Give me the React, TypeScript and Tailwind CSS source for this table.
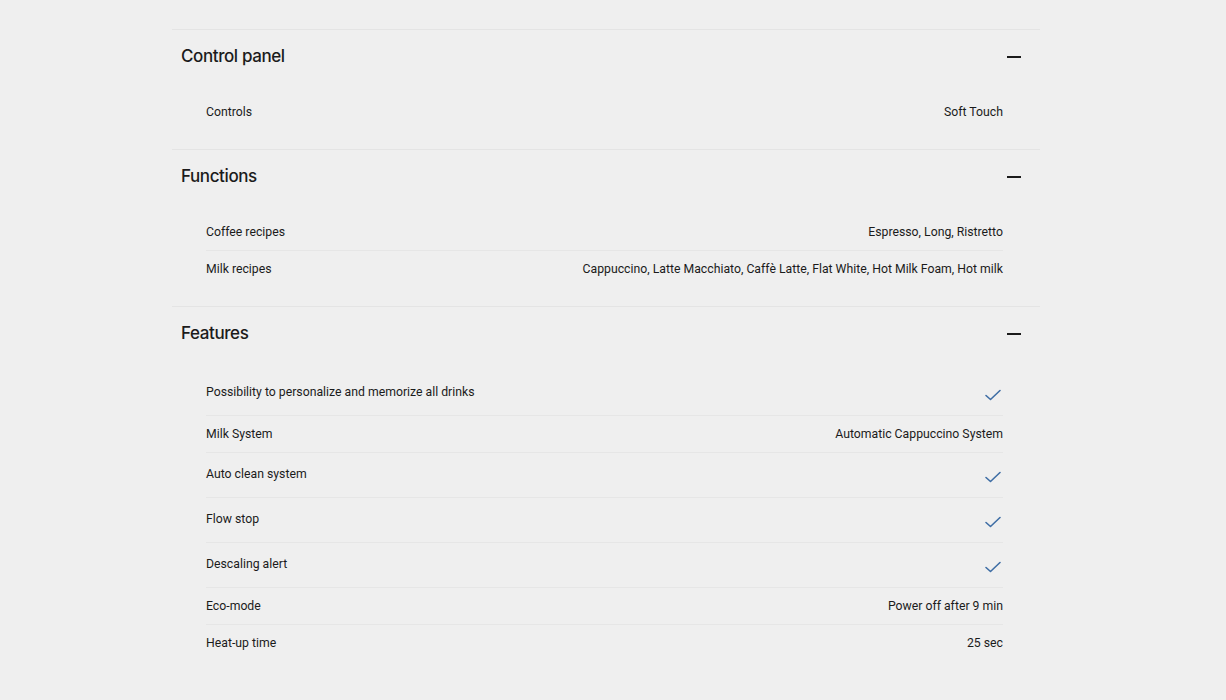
import React from 'react';

type Row = { label: string; value?: string; check?: boolean };

const sections: { title: string; rows: Row[] }[] = [
  { title: 'Control panel', rows: [{ label: 'Controls', value: 'Soft Touch' }] },
  {
    title: 'Functions',
    rows: [
      { label: 'Coffee recipes', value: 'Espresso, Long, Ristretto' },
      { label: 'Milk recipes', value: 'Cappuccino, Latte Macchiato, Caffè Latte, Flat White, Hot Milk Foam, Hot milk' },
    ],
  },
  {
    title: 'Features',
    rows: [
      { label: 'Possibility to personalize and memorize all drinks', check: true },
      { label: 'Milk System', value: 'Automatic Cappuccino System' },
      { label: 'Auto clean system', check: true },
      { label: 'Flow stop', check: true },
      { label: 'Descaling alert', check: true },
      { label: 'Eco-mode', value: 'Power off after 9 min' },
      { label: 'Heat-up time', value: '25 sec' },
    ],
  },
];

function Check() {
  return (
    <svg width="18" height="14" viewBox="0 0 18 14" fill="none" className="pt-[3px] mr-[1px] box-content">
      <path d="M2 7.5 L6.5 11.5 L16 2.5" stroke="#3f6ea5" strokeWidth="1.6" strokeLinecap="round" strokeLinejoin="round" />
    </svg>
  );
}

export default function App() {
  return (
    <div className="min-h-[700px] bg-[#efefef] pt-[29px] font-['Inter',sans-serif] text-[#1b1b1b]">
      <div className="ml-[172px] w-[868px]">
        {sections.map((s) => (
          <section key={s.title} className="border-t border-[#e4e4e4] pb-[19px]">
            <div className="flex items-center justify-between pl-[9px] pr-[19px] pt-[14px]">
              <h3 className="text-[17px] leading-6 font-medium tracking-[-0.4px]">{s.title}</h3>
              <span className="block h-[2.5px] w-[14px] bg-[#1b1b1b] mt-[2px]" />
            </div>
            <div className="mt-[26px] pl-[34px] pr-[37px] font-['Roboto',sans-serif]">
              {s.rows.map((r, i) => (
                <div
                  key={r.label}
                  className={`flex items-center justify-between text-[12.25px] leading-5 ${r.check ? 'h-[44px]' : 'h-[36px]'} ${i > 0 ? 'border-t border-[#e6e6e6] box-content' : ''}`}
                >
                  <span className={r.check ? 'pb-[3px]' : ''}>{r.label}</span>
                  {r.check ? <Check /> : <span className="text-right">{r.value}</span>}
                </div>
              ))}
            </div>
          </section>
        ))}
      </div>
    </div>
  );
}
